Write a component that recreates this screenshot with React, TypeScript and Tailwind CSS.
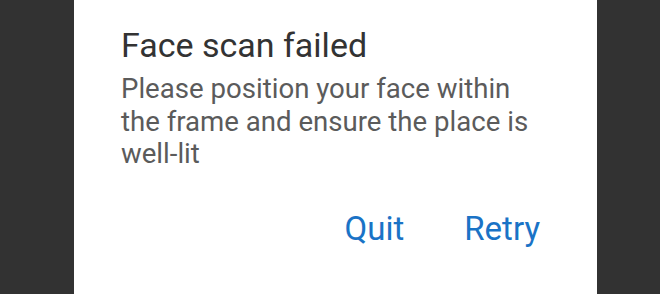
export default function App() {
  return (
    <div className="w-[660px] h-[294px] bg-[#323232] flex overflow-hidden" style={{ fontFamily: "Roboto, 'Noto Sans', sans-serif" }}>
      <div className="ml-[74px] w-[523px] h-full bg-white pl-[47px] pr-[57px] pt-[25px] flex flex-col">
        <h1 className="text-[34px] leading-[40px] text-[#333333] font-normal">Face scan failed</h1>
        <p className="mt-[8px] text-[27.6px] leading-[32.5px] text-[#5b5b5b]">
          Please position your face within the frame and ensure the place is well-lit
        </p>
        <div className="mt-[38px] flex justify-end gap-[60px]">
          <button className="text-[33px] leading-[40px] text-[#1a73c6]">Quit</button>
          <button className="text-[33px] leading-[40px] text-[#1a73c6]">Retry</button>
        </div>
      </div>
    </div>
  );
}
